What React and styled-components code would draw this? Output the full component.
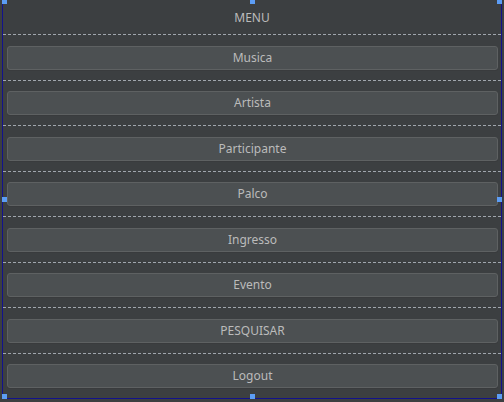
import React from "react";
import styled, { createGlobalStyle } from "styled-components";

const GlobalStyle = createGlobalStyle`
  html, body {
    margin: 0;
    padding: 0;
    background: #3c3f41;
  }
  body {
    font-family: "Noto Sans", "Liberation Sans", sans-serif;
  }
`;

const items = [
  "Musica",
  "Artista",
  "Participante",
  "Palco",
  "Ingresso",
  "Evento",
  "PESQUISAR",
  "Logout",
];

const handles = [
  { x: "left", y: "top" },
  { x: "center", y: "top" },
  { x: "right", y: "top" },
  { x: "left", y: "middle" },
  { x: "right", y: "middle" },
  { x: "left", y: "bottom" },
  { x: "center", y: "bottom" },
  { x: "right", y: "bottom" },
];

const App = () => (
  <>
    <GlobalStyle />
    <Frame>
      <Header>MENU</Header>
      <List>
        {items.map((label) => (
          <Section key={label}>
            <MenuButton type="button">{label}</MenuButton>
          </Section>
        ))}
      </List>
      {handles.map((h) => (
        <Handle key={`${h.x}-${h.y}`} $x={h.x} $y={h.y} />
      ))}
    </Frame>
  </>
);

export default App;

const Frame = styled.div`
  position: relative;
  box-sizing: border-box;
  width: 500px;
  height: 399px;
  margin-left: 2px;
  border-left: 1px solid #12128c;
  border-right: 1px solid #12128c;
  border-bottom: 1px solid #12128c;
  display: flex;
  flex-direction: column;
  background: #3c3f41;
`;

const Header = styled.div`
  height: 34px;
  display: flex;
  align-items: center;
  justify-content: center;
  color: #bbbbbb;
  font-size: 12px;
  flex-shrink: 0;
`;

const List = styled.div`
  flex: 1;
  display: flex;
  flex-direction: column;
`;

const Section = styled.div`
  flex: 1;
  display: flex;
  align-items: center;
  padding: 2px 3px 0 4px;
  background-image: linear-gradient(to right, #a0a6ad 3px, transparent 3px);
  background-size: 5px 1px;
  background-repeat: repeat-x;
  background-position: 0 0;
`;

const MenuButton = styled.button`
  width: 100%;
  height: 24px;
  box-sizing: border-box;
  background: #4c5052;
  border: 1px solid #5e6162;
  border-radius: 3px;
  box-shadow: 0 1px 0 #393b3d;
  color: #bbbbbb;
  font-family: "Noto Sans", "Liberation Sans", sans-serif;
  font-size: 12px;
  padding: 0;
  line-height: 20px;
  cursor: pointer;
`;

const Handle = styled.span`
  position: absolute;
  width: 5px;
  height: 5px;
  background: #5c9df5;
  ${({ $x }) =>
    $x === "left" ? "left: -1px;" : $x === "right" ? "right: -1px;" : "left: 247px;"}
  ${({ $y }) =>
    $y === "top" ? "top: -1px;" : $y === "bottom" ? "bottom: -1px;" : "top: 197px;"}
`;
